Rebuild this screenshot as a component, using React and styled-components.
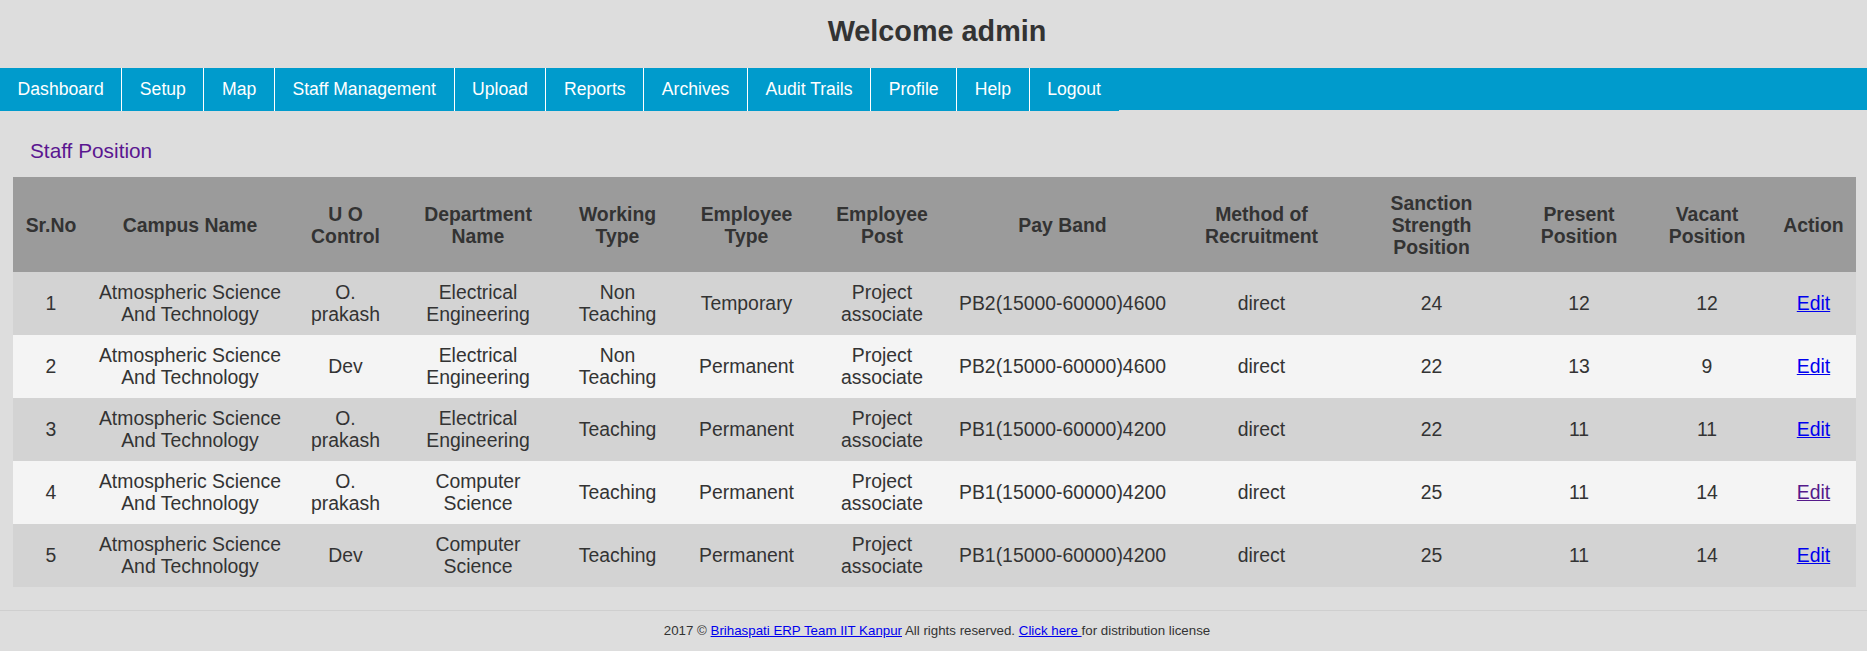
import React from "react";
import styled, { createGlobalStyle } from "styled-components";

const GlobalStyle = createGlobalStyle`
  html, body {
    margin: 0;
    padding: 0;
    background: #dddddd;
  }
  body {
    font-family: "Liberation Sans", Arial, sans-serif;
    color: #333333;
  }
  #root {
    min-height: 651px;
  }
`;

const Page = styled.div`
  display: flex;
  flex-direction: column;
  min-height: 651px;
  background: #dddddd;
`;

const TitleBar = styled.header`
  box-sizing: border-box;
  height: 68px;
  padding: 15px 0 0 7px;
  text-align: center;
`;

const Title = styled.h1`
  margin: 0;
  font-size: 28.8px;
  line-height: normal;
  font-weight: bold;
  color: #333333;
`;

const NavBar = styled.nav`
  display: flex;
  align-items: flex-start;
  height: 42px;
  background: #009bcc;
`;

const NavItem = styled.a`
  display: flex;
  align-items: center;
  height: 43px;
  padding: 0 17.6px;
  background: #009bcc;
  color: #ffffff;
  font-size: 17.6px;
  text-decoration: none;
  white-space: nowrap;
  border-left: ${(p) => (p.$first ? "none" : "1px solid #ffffff")};
`;

const Content = styled.main`
  padding: 29px 11px 0 13px;
`;

const SectionTitle = styled.h2`
  margin: 0 0 14px 17px;
  font-size: 20.8px;
  line-height: normal;
  font-weight: normal;
  color: #5a1690;
`;

const Table = styled.table`
  width: 1843px;
  table-layout: fixed;
  border-collapse: collapse;
  border-spacing: 0;
  font-size: 19.4px;
  color: #333333;
`;

const HeadRow = styled.tr`
  background: #9b9b9b;
`;

const Th = styled.th`
  padding: 14.5px 9px 13.5px;
  font-weight: bold;
  text-align: center;
  vertical-align: middle;
  line-height: 22.3px;
  color: #333333;
`;

const Row = styled.tr`
  background: ${(p) => (p.$even ? "#f4f4f4" : "#d3d3d3")};
`;

const Td = styled.td`
  padding: 9.2px 9px;
  text-align: center;
  vertical-align: middle;
  line-height: 22.3px;
`;

const EditLink = styled.a`
  color: ${(p) => (p.$visited ? "#551a8b" : "#0000ee")};
  text-decoration: underline;
  cursor: pointer;
`;

const Footer = styled.footer`
  margin-top: 23px;
  height: 41px;
  box-sizing: border-box;
  border-top: 1px solid #cfcfcf;
  display: flex;
  align-items: center;
  justify-content: center;
  padding-left: 7px;
  font-size: 13.3px;
  color: #333333;
`;

const FooterLink = styled.a`
  color: #0000ee;
  text-decoration: underline;
`;

const navItems = [
  "Dashboard",
  "Setup",
  "Map",
  "Staff Management",
  "Upload",
  "Reports",
  "Archives",
  "Audit Trails",
  "Profile",
  "Help",
  "Logout",
];

const columns = [
  { label: "Sr.No", width: 76 },
  { label: "Campus Name", width: 202 },
  { label: "U O Control", width: 109 },
  { label: "Department Name", width: 156 },
  { label: "Working Type", width: 123 },
  { label: "Employee Type", width: 135 },
  { label: "Employee Post", width: 136 },
  { label: "Pay Band", width: 225 },
  { label: "Method of Recruitment", width: 173 },
  { label: "Sanction Strength Position", width: 167 },
  { label: "Present Position", width: 128 },
  { label: "Vacant Position", width: 128 },
  { label: "Action", width: 85 },
];

const rows = [
  ["1", "Atmospheric Science And Technology", "O. prakash", "Electrical Engineering", "Non Teaching", "Temporary", "Project associate", "PB2(15000-60000)4600", "direct", "24", "12", "12"],
  ["2", "Atmospheric Science And Technology", "Dev", "Electrical Engineering", "Non Teaching", "Permanent", "Project associate", "PB2(15000-60000)4600", "direct", "22", "13", "9"],
  ["3", "Atmospheric Science And Technology", "O. prakash", "Electrical Engineering", "Teaching", "Permanent", "Project associate", "PB1(15000-60000)4200", "direct", "22", "11", "11"],
  ["4", "Atmospheric Science And Technology", "O. prakash", "Computer Science", "Teaching", "Permanent", "Project associate", "PB1(15000-60000)4200", "direct", "25", "11", "14"],
  ["5", "Atmospheric Science And Technology", "Dev", "Computer Science", "Teaching", "Permanent", "Project associate", "PB1(15000-60000)4200", "direct", "25", "11", "14"],
];

export default function App() {
  return (
    <Page>
      <GlobalStyle />
      <TitleBar>
        <Title>Welcome admin</Title>
      </TitleBar>
      <NavBar>
        {navItems.map((item, i) => (
          <NavItem key={item} $first={i === 0} href="#">
            {item}
          </NavItem>
        ))}
      </NavBar>
      <Content>
        <SectionTitle>Staff Position</SectionTitle>
        <Table>
          <colgroup>
            {columns.map((c) => (
              <col key={c.label} style={{ width: c.width }} />
            ))}
          </colgroup>
          <thead>
            <HeadRow>
              {columns.map((c) => (
                <Th key={c.label}>{c.label}</Th>
              ))}
            </HeadRow>
          </thead>
          <tbody>
            {rows.map((r, i) => (
              <Row key={r[0]} $even={i % 2 === 1}>
                {r.map((cell, j) => (
                  <Td key={j}>{cell}</Td>
                ))}
                <Td>
                  <EditLink href="#" $visited={i === 3}>
                    Edit
                  </EditLink>
                </Td>
              </Row>
            ))}
          </tbody>
        </Table>
      </Content>
      <Footer>
        <span>
          2017 © <FooterLink href="#">Brihaspati ERP Team IIT Kanpur</FooterLink> All rights reserved.{" "}
          <FooterLink href="#">Click here </FooterLink>for distribution license
        </span>
      </Footer>
    </Page>
  );
}
